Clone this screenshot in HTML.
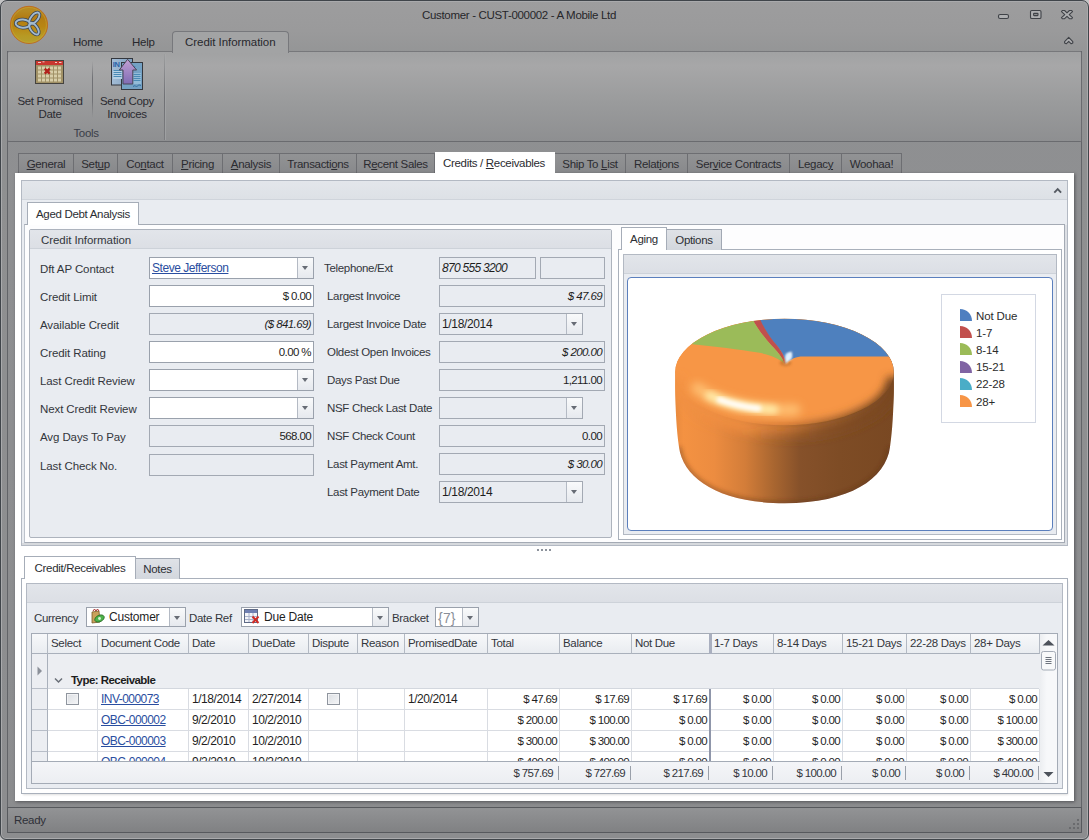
<!DOCTYPE html>
<html><head><meta charset="utf-8"><title>Customer</title>
<style>
*{box-sizing:border-box;margin:0;padding:0}
html,body{width:1089px;height:840px;overflow:hidden;background:#c4c4c5}
body{font-family:"Liberation Sans",sans-serif;font-size:11.5px;letter-spacing:-0.32px;color:#2a2a2a;position:relative}
.a{position:absolute}
.t{position:absolute;white-space:nowrap;line-height:14px}
.r{position:absolute;white-space:nowrap;line-height:14px;text-align:right}
.c{position:absolute;white-space:nowrap;line-height:14px;text-align:center}
u{text-decoration:underline;text-underline-offset:1px}
#win{left:0;top:0;width:1089px;height:840px;border:1px solid #40454a;border-radius:7px 7px 6px 6px;box-shadow:inset 0 0 0 1px #a9aaac;background:linear-gradient(#9d9d9e 0,#9a9a9b 30px,#949596 52px,#8f9091 150px,#8c8d8f 100%)}
.mt{position:absolute;top:153px;height:21px;border:1px solid #6d6e72;border-bottom:none;background:linear-gradient(#929395,#87888b);color:#2b2b30;text-align:center;line-height:21px;white-space:nowrap}
.f{position:absolute;height:22px;border:1px solid #a3a9b3;background:#e9ecf1}
.f.w{background:#fff;border-color:#9aa1ac}
.f .v{position:absolute;right:2px;top:3px;line-height:14px;white-space:nowrap;font-size:11.5px;letter-spacing:-0.6px;color:#1e1e1e}
.f .l{position:absolute;left:2px;top:3px;line-height:14px;white-space:nowrap;font-size:12px;letter-spacing:-0.45px;color:#1e1e1e}
.dd{position:absolute;right:0;top:0;bottom:0;width:16px;border-left:1px solid #b4bac4;background:linear-gradient(#f9fafb,#e6e9ee)}
.dd:after{content:"";position:absolute;left:3.5px;top:8px;border:3.8px solid transparent;border-top:4px solid #676c75;border-bottom:none}
.lb{position:absolute;white-space:nowrap;line-height:14px;color:#33363c}
.st{position:absolute;height:21px;border:1px solid #a1a8b3;border-bottom:none;background:linear-gradient(#dfe2e7,#d3d7dd);line-height:20px;text-align:center;color:#2c2e33;white-space:nowrap}
.st.on{background:#fff;border-color:#a6adb8;color:#2c2e33}
.gh{position:absolute;top:634px;height:20px;border-right:1px solid #b3b9c3;border-bottom:1px solid #a9b0bb;background:linear-gradient(#f7f8fa,#e9ecf0);line-height:18px;padding-left:3px;color:#33363c;white-space:nowrap;overflow:hidden}
.cell{position:absolute;height:21px;border-right:1px solid #d9dce2;border-bottom:1px solid #d9dce2;background:#fff;line-height:20px;white-space:nowrap;overflow:hidden;font-size:12px;letter-spacing:-0.45px;color:#1f1f1f}
.cell.n{text-align:right;padding-right:2px;font-size:11.5px;letter-spacing:-0.65px}
.cell.x{padding-left:3px}
.cell a{color:#2a4ea0;text-decoration:underline;letter-spacing:-0.55px}
.ind{position:absolute;left:32px;width:16px;border-right:1px solid #a9b0bb;border-bottom:1px solid #b8bec8;background:#eceef2}
.ft{position:absolute;top:766px;line-height:14px;text-align:right;white-space:nowrap;font-size:11.5px;letter-spacing:-0.65px;color:#33363c;border-right:1px solid #9aa0aa;padding-right:5px;height:14px}
.cb{position:absolute;width:13px;height:12px;border:1px solid #8f959e;background:linear-gradient(135deg,#dcdfe3,#f4f5f7);box-shadow:inset 0 0 0 1px #f2f3f5}
</style></head><body>
<div class="a" id="win"></div>
<div class="t" style="left:422px;top:8px;color:#26262a">Customer - CUST-000002 - A Mobile Ltd</div>
<svg class="a" style="left:9px;top:5px" width="40" height="40" viewBox="0 0 40 40">
<defs><linearGradient id="lg" x1="0" y1="0" x2="0" y2="1"><stop offset="0" stop-color="#b8881f"/><stop offset="0.12" stop-color="#b58a22"/><stop offset="0.3" stop-color="#b27c14"/><stop offset="0.55" stop-color="#b98613"/><stop offset="0.8" stop-color="#b79a24"/><stop offset="1" stop-color="#b3a030"/></linearGradient></defs>
<circle cx="20" cy="19.9" r="18.6" fill="url(#lg)" stroke="#c06a1c" stroke-width="0.9"/>
<circle cx="20" cy="19.9" r="17.4" fill="none" stroke="#c9a636" stroke-opacity="0.55" stroke-width="1"/>
<g fill="none" stroke="#3b4554" stroke-width="3.5"><ellipse cx="13.8" cy="18.6" rx="7.2" ry="4.1" transform="rotate(4 13.8 18.6)"/><ellipse cx="25.4" cy="13.2" rx="6.8" ry="3.4" transform="rotate(-50 25.4 13.2)"/><ellipse cx="25" cy="23.7" rx="6.8" ry="3.4" transform="rotate(54 25 23.7)"/></g>
<g fill="none" stroke="#a2bace" stroke-width="1.9"><ellipse cx="13.8" cy="18.6" rx="7.2" ry="4.1" transform="rotate(4 13.8 18.6)"/><ellipse cx="25.4" cy="13.2" rx="6.8" ry="3.4" transform="rotate(-50 25.4 13.2)"/><ellipse cx="25" cy="23.7" rx="6.8" ry="3.4" transform="rotate(54 25 23.7)"/></g>
</svg>
<svg class="a" style="left:990px;top:5px" width="95" height="45" viewBox="0 0 95 45">
<g fill="#aeafb1" stroke="#3f4247" stroke-width="1.1" stroke-linejoin="round">
<rect x="8.5" y="9.5" width="10" height="4" rx="1.6"/>
<rect x="40.5" y="5.5" width="10.5" height="8" rx="1.3"/><rect x="43.6" y="8.4" width="4.4" height="2.2" rx="0.5" fill="#8d8e90"/>
<path d="M72.3 5.5 L74.6 5.5 L77 7.9 L79.4 5.5 L81.7 5.5 L82.5 6.6 L79.2 9.6 L82.5 12.6 L81.7 13.7 L79.4 13.7 L77 11.3 L74.6 13.7 L72.3 13.7 L71.5 12.6 L74.8 9.6 L71.5 6.6 Z"/>
<path d="M74.6 36.6 L78.7 32.4 L82.8 36.6 L82.8 38 L81.2 38.8 L78.7 36.4 L76.2 38.8 L74.6 38 Z"/>
</g></svg>
<div class="a" style="left:7px;top:51px;width:1075px;height:782px;border:1px solid #626468;background:linear-gradient(#8f9092,#8b8c8e)"></div>
<div class="t" style="left:73px;top:35px;color:#28282d;letter-spacing:-0.25px">Home</div>
<div class="t" style="left:132px;top:35px;color:#28282d;letter-spacing:-0.25px">Help</div>
<div class="a" style="left:7px;top:51px;width:1075px;height:91px;border:1px solid #6a6b6f;border-top-color:#77787b;border-radius:2px;background:linear-gradient(#a1a2a3 0,#a7a7a8 14px,#9a9b9c 50px,#8e8f91 100%)"></div>
<div class="a" style="left:172px;top:31px;width:117px;height:22px;border:1px solid #77787c;border-bottom:none;border-radius:4px 4px 0 0;background:linear-gradient(#a2a3a4,#a2a3a4)"></div>
<div class="t" style="left:185px;top:35px;color:#28282d;letter-spacing:-0.05px">Credit Information</div>
<div class="a" style="left:164px;top:54px;width:1px;height:86px;background:linear-gradient(#9d9e9f,#6f7074 50%,#7b7c7f)"></div>
<div class="a" style="left:165px;top:54px;width:1px;height:86px;background:#a9aaab;opacity:.6"></div>
<div class="a" style="left:92px;top:61px;width:1px;height:57px;background:linear-gradient(rgba(110,111,115,0),#707175 30%,#707175 70%,rgba(110,111,115,0))"></div>
<div class="c" style="left:10px;width:80px;top:95px;color:#2b2b31;line-height:13px">Set Promised<br>Date</div>
<div class="c" style="left:94px;width:66px;top:95px;color:#2b2b31;line-height:13px">Send Copy<br>Invoices</div>
<div class="c" style="left:60px;width:52px;top:126px;color:#3a3d48">Tools</div>
<svg class="a" style="left:35px;top:60px" width="30" height="25" viewBox="0 0 30 25">
<rect x="0.5" y="0.5" width="28" height="23" fill="#a39468" stroke="#45433f"/>
<rect x="1" y="1" width="27" height="4" fill="#c9372f"/>
<path d="M3 2.5h3M7.5 1.8h2M20 2.5h2M24 2.5h2.5" stroke="#f0c9c4" stroke-width="1"/>
<rect x="1" y="5" width="27" height="18" fill="#a19166"/>
<g fill="#d8cea9">
<rect x="3" y="6.5" width="3" height="3"/>
<rect x="7" y="6.5" width="3" height="3"/>
<rect x="11" y="6.5" width="3" height="3"/>
<rect x="15" y="6.5" width="3" height="3"/>
<rect x="19" y="6.5" width="3" height="3"/>
<rect x="23" y="6.5" width="3" height="3"/>
<rect x="3" y="10.5" width="3" height="3"/>
<rect x="7" y="10.5" width="3" height="3"/>
<rect x="11" y="10.5" width="3" height="3"/>
<rect x="15" y="10.5" width="3" height="3"/>
<rect x="19" y="10.5" width="3" height="3"/>
<rect x="23" y="10.5" width="3" height="3"/>
<rect x="3" y="14.5" width="3" height="3"/>
<rect x="7" y="14.5" width="3" height="3"/>
<rect x="11" y="14.5" width="3" height="3"/>
<rect x="15" y="14.5" width="3" height="3"/>
<rect x="19" y="14.5" width="3" height="3"/>
<rect x="23" y="14.5" width="3" height="3"/>
<rect x="3" y="18.5" width="3" height="3"/>
<rect x="7" y="18.5" width="3" height="3"/>
<rect x="11" y="18.5" width="3" height="3"/>
<rect x="15" y="18.5" width="3" height="3"/>
<rect x="19" y="18.5" width="3" height="3"/>
<rect x="23" y="18.5" width="3" height="3"/>
</g>
<path d="M9.7 8.6 L14.7 13.6 M14.7 8.6 L9.7 13.6" stroke="#b3211c" stroke-width="2.3"/>
</svg>
<svg class="a" style="left:111px;top:57px" width="34" height="34" viewBox="0 0 34 34">
<defs><linearGradient id="ar" x1="0" y1="0" x2="0" y2="1"><stop offset="0" stop-color="#c3a0d4"/><stop offset="1" stop-color="#7f6bb4"/></linearGradient>
<linearGradient id="pg1" x1="0" y1="0" x2="1" y2="0"><stop offset="0" stop-color="#a4bdd6"/><stop offset="1" stop-color="#7f9fc0"/></linearGradient></defs>
<rect x="0.5" y="1.5" width="21" height="26.5" fill="url(#pg1)" stroke="#33373e"/>
<rect x="10.5" y="5.5" width="21" height="27" fill="#74a1c4" stroke="#33373e"/>
<rect x="2" y="13" width="9" height="9" fill="#b5d0e4"/><rect x="22" y="16" width="8" height="11" fill="#93bcd8"/>
<g stroke="#4a8ab5" stroke-width="1"><path d="M2.5 13.5h8M2.5 15.5h8M2.5 17.5h8M2.5 19.5h8M22.5 17.5h7M22.5 19.5h7M22.5 21.5h7M22.5 23.5h7"/></g>
<path d="M22 29.5 c2 -2 3 1 4.5 -0.5 s2 -1 3.5 -0.5" fill="none" stroke="#2f6f9f" stroke-width="1"/>
<text x="1.8" y="10.3" font-family="Liberation Sans" font-size="7.5" font-weight="bold" fill="#2a62a8" letter-spacing="-0.3">IN</text>
<text x="21" y="12" font-family="Liberation Sans" font-size="6" font-weight="bold" fill="#3b78b6">v</text>
<path d="M16.6 2.3 L25.6 13 L21.8 13 L21.8 27 L12 27 L12 13 L8.3 13 Z" fill="url(#ar)" stroke="#4a4656" stroke-width="1"/>
</svg>
<div class="mt" style="left:18px;width:56px"><u>G</u>eneral</div>
<div class="mt" style="left:73px;width:45px">Set<u>u</u>p</div>
<div class="mt" style="left:117px;width:56px">Co<u>n</u>tact</div>
<div class="mt" style="left:172px;width:51px"><u>P</u>ricing</div>
<div class="mt" style="left:222px;width:58px"><u>A</u>nalysis</div>
<div class="mt" style="left:279px;width:78px">Transacti<u>o</u>ns</div>
<div class="mt" style="left:356px;width:79px">R<u>e</u>cent Sales</div>
<div class="mt" style="left:554px;width:72px">Ship To <u>L</u>ist</div>
<div class="mt" style="left:625px;width:63px">Relat<u>i</u>ons</div>
<div class="mt" style="left:687px;width:103px">Ser<u>v</u>ice Contracts</div>
<div class="mt" style="left:789px;width:53px">Legac<u>y</u></div>
<div class="mt" style="left:841px;width:61px">Woohaa!</div>
<div class="a" style="left:15px;top:173px;width:1059px;height:628px;background:#fff;box-shadow:1px 1px 3px rgba(40,40,45,.55)"></div>
<div class="a" style="left:435px;top:152px;width:120px;height:22px;background:#fff"></div>
<div class="t" style="left:443px;top:156px;color:#2b2b30">Credits / <u>R</u>eceivables</div>
<div class="a" style="left:21px;top:180px;width:1047px;height:366px;border:1px solid #b3b9c3;background:#d6d9dd"></div>
<div class="a" style="left:22px;top:181px;width:1045px;height:362px;background:#e9ecf1"></div>
<div class="a" style="left:22px;top:181px;width:1045px;height:19px;background:linear-gradient(#e3e6eb,#dde1e6);border-bottom:1px solid #cfd4db"></div>
<svg class="a" style="left:1053px;top:187px" width="10" height="8"><path d="M1.3 5.6 L4.7 2.2 L8.1 5.6" fill="none" stroke="#555a62" stroke-width="1.9"/></svg>
<div class="a" style="left:24px;top:224px;width:1041px;height:319px;background:#fdfdfe;border:1px solid #a4aab4;border-left-color:#bcc2cb"></div>
<div class="a" style="left:1065px;top:225px;width:2px;height:320px;background:#dcdfe4"></div>
<div class="st on" style="left:27px;top:202px;width:112px;height:23px;line-height:22px">Aged Debt Analysis</div>
<div class="a" style="left:29px;top:229px;width:583px;height:309px;border:1px solid #adb3bd;border-radius:2px;background:#e9ecf1"></div>
<div class="a" style="left:30px;top:230px;width:581px;height:19px;background:linear-gradient(#e2e5ea,#dcdfe5);border-bottom:1px solid #cdd2d9"></div>
<div class="lb" style="left:41px;top:233px;letter-spacing:-0.07px">Credit Information</div>
<div class="lb" style="left:40px;top:262px;letter-spacing:-0.1px">Dft AP Contact</div>
<div class="lb" style="left:40px;top:290px;letter-spacing:-0.1px">Credit Limit</div>
<div class="lb" style="left:40px;top:318px;letter-spacing:-0.1px">Available Credit</div>
<div class="lb" style="left:40px;top:346px;letter-spacing:-0.1px">Credit Rating</div>
<div class="lb" style="left:40px;top:374px;letter-spacing:-0.1px">Last Credit Review</div>
<div class="lb" style="left:40px;top:402px;letter-spacing:-0.1px">Next Credit Review</div>
<div class="lb" style="left:40px;top:430px;letter-spacing:-0.1px">Avg Days To Pay</div>
<div class="lb" style="left:40px;top:459px;letter-spacing:-0.1px">Last Check No.</div>
<div class="f w" style="left:149px;top:257px;width:165px"><span class="l" style="color:#2a4ea0;text-decoration:underline;letter-spacing:-0.45px">Steve Jefferson</span><div class="dd"></div></div>
<div class="f w" style="left:149px;top:285px;width:165px"><span class="v">$ 0.00</span></div>
<div class="f" style="left:149px;top:313px;width:165px"><span class="v" style="font-style:italic">($ 841.69)</span></div>
<div class="f w" style="left:149px;top:341px;width:165px"><span class="v">0.00 %</span></div>
<div class="f w" style="left:149px;top:369px;width:165px"><div class="dd"></div></div>
<div class="f w" style="left:149px;top:397px;width:165px"><div class="dd"></div></div>
<div class="f" style="left:149px;top:425px;width:165px"><span class="v">568.00</span></div>
<div class="f" style="left:149px;top:454px;width:165px"></div>
<div class="lb" style="left:324px;top:261px">Telephone/Ext</div>
<div class="lb" style="left:327px;top:289px">Largest Invoice</div>
<div class="lb" style="left:327px;top:317px">Largest Invoice Date</div>
<div class="lb" style="left:327px;top:345px">Oldest Open Invoices</div>
<div class="lb" style="left:327px;top:373px">Days Past Due</div>
<div class="lb" style="left:327px;top:401px">NSF Check Last Date</div>
<div class="lb" style="left:327px;top:429px">NSF Check Count</div>
<div class="lb" style="left:327px;top:457px">Last Payment Amt.</div>
<div class="lb" style="left:327px;top:485px">Last Payment Date</div>
<div class="f" style="left:439px;top:257px;width:97px"><span class="l" style="font-style:italic;letter-spacing:-0.7px">870 555 3200</span></div>
<div class="f" style="left:540px;top:257px;width:65px"></div>
<div class="f" style="left:439px;top:285px;width:166px"><span class="v" style="font-style:italic">$ 47.69</span></div>
<div class="f" style="left:439px;top:313px;width:144px"><span class="l" style="letter-spacing:-0.35px">1/18/2014</span><div class="dd"></div></div>
<div class="f" style="left:439px;top:341px;width:166px"><span class="v" style="font-style:italic">$ 200.00</span></div>
<div class="f" style="left:439px;top:369px;width:166px"><span class="v">1,211.00</span></div>
<div class="f" style="left:439px;top:397px;width:144px"><div class="dd"></div></div>
<div class="f" style="left:439px;top:425px;width:166px"><span class="v">0.00</span></div>
<div class="f" style="left:439px;top:453px;width:166px"><span class="v" style="font-style:italic">$ 30.00</span></div>
<div class="f" style="left:439px;top:481px;width:144px"><span class="l" style="letter-spacing:-0.35px">1/18/2014</span><div class="dd"></div></div>
<div class="a" style="left:618px;top:249px;width:444px;height:291px;border:1px solid #a9b0bb;background:#fff"></div>
<div class="st" style="left:666px;top:229px;width:56px">Options</div>
<div class="st on" style="left:621px;top:227px;width:46px;height:23px;line-height:22px">Aging</div>
<div class="a" style="left:623px;top:254px;width:434px;height:281px;border:1px solid #b3b9c3;background:#e9ecf1"></div>
<div class="a" style="left:624px;top:255px;width:432px;height:19px;background:linear-gradient(#e2e5ea,#dcdfe5);border-bottom:1px solid #cdd2d9"></div>
<div class="a" style="left:627px;top:277px;width:426px;height:254px;border:1px solid #5b7fbd;border-radius:4px;background:#fff"></div>
<svg class="a" style="left:628px;top:278px" width="424" height="252" viewBox="628 278 424 252">
<defs>
<linearGradient id="pb" gradientUnits="userSpaceOnUse" x1="675" y1="0" x2="894" y2="0">
<stop offset="0" stop-color="#e88a3e"/><stop offset="0.04" stop-color="#f49242"/><stop offset="0.18" stop-color="#ec8c40"/><stop offset="0.32" stop-color="#d37d39"/><stop offset="0.45" stop-color="#a96630"/><stop offset="0.57" stop-color="#86512a"/><stop offset="0.75" stop-color="#7e4c25"/><stop offset="1" stop-color="#794822"/>
</linearGradient>
<linearGradient id="rimg" gradientUnits="userSpaceOnUse" x1="675" y1="0" x2="894" y2="0">
<stop offset="0" stop-color="#f39243"/><stop offset="0.3" stop-color="#ee8e41"/><stop offset="0.5" stop-color="#d17b38"/><stop offset="0.65" stop-color="#a7642f"/><stop offset="0.85" stop-color="#875229"/><stop offset="1" stop-color="#7d4b24"/>
</linearGradient>
<linearGradient id="shg" gradientUnits="userSpaceOnUse" x1="675" y1="0" x2="894" y2="0">
<stop offset="0" stop-color="#7a4822" stop-opacity="0"/><stop offset="0.35" stop-color="#7a4822" stop-opacity="0.04"/><stop offset="0.52" stop-color="#7a4822" stop-opacity="0.4"/><stop offset="0.7" stop-color="#7a4822" stop-opacity="0.8"/><stop offset="1" stop-color="#774520" stop-opacity="0.9"/>
</linearGradient>
<clipPath id="psil"><path d="M675.2 372 A109.3 53.2 0 0 1 893.8 372 L893.8 386 C893.6 410 892.5 430 890 447 C886 479 849 503.2 784.5 503.2 C720 503.2 683 479 679 447 C676.5 430 675.4 410 675.2 386 Z"/></clipPath>
<clipPath id="ptop"><ellipse cx="784.5" cy="372" rx="109.4" ry="53.2"/></clipPath>
<filter id="bl1" x="-30%" y="-30%" width="160%" height="160%"><feGaussianBlur stdDeviation="1"/></filter>
<filter id="bl2" x="-20%" y="-40%" width="140%" height="180%"><feGaussianBlur stdDeviation="2"/></filter>
<filter id="bl3" x="-20%" y="-40%" width="140%" height="180%"><feGaussianBlur stdDeviation="3"/></filter>
<filter id="bl4" x="-30%" y="-50%" width="160%" height="200%"><feGaussianBlur stdDeviation="4"/></filter>
</defs>
<g clip-path="url(#psil)">
<rect x="670" y="310" width="230" height="200" fill="url(#pb)"/>
<path d="M679 447 C683 479 720 503.2 784.5 503.2 C849 503.2 886 479 890 447" fill="none" stroke="#5a3315" stroke-opacity="0.4" stroke-width="5" filter="url(#bl2)"/>
<g clip-path="url(#ptop)">
<rect x="670" y="310" width="230" height="125" fill="#f79646"/>
<path d="M785.5 363.5 C785.3 357 781 350 773 341.5 C768 335 762 326 758.3 317 L760 300 L910 300 L910 356.4 L803 356.4 C796 356.4 791 359 785.5 363.5 Z" fill="#4e80be"/>
<path d="M785.5 363.5 C785.3 357 781 350 773.5 341.5 C768.5 335 762.5 326 759.3 317 L751.3 317 C756 327 764 337 771 345 C778 352 782 357 784.3 363.5 Z" fill="#c0504d"/>
<path d="M784.5 363.5 C782 357 778 352 771 345 C764 337 756 327 751.5 317 L660 317 L690 344 C715 346.5 740 349.5 758 352.6 C770 354.8 778 358 784.5 363.5 Z" fill="#9bbb59"/>
</g>
<path d="M675 372 A109.4 53.2 0 0 0 894 372" fill="none" stroke="url(#rimg)" stroke-width="14" filter="url(#bl4)" transform="translate(0 5)"/>
<path d="M675 372 A109.4 53.2 0 0 0 894 372" fill="none" stroke="url(#shg)" stroke-width="9" filter="url(#bl4)" transform="translate(0 10)"/>
<path d="M697.0 388.0 A101 44 0 0 0 795.1 409.8" fill="none" stroke="#ffc477" stroke-width="11" stroke-opacity="0.9" stroke-linecap="round" filter="url(#bl4)"/>
<path d="M709.4 395.4 A101 44 0 0 0 773.9 409.8" fill="none" stroke="#ffe9a6" stroke-width="9" stroke-linecap="round" filter="url(#bl3)"/>
<path d="M719.6 399.7 A101 44 0 0 0 758.4 408.5" fill="none" stroke="#ffffff" stroke-width="6" stroke-linecap="round" filter="url(#bl2)"/>
<ellipse cx="785.5" cy="363" rx="6" ry="3.2" fill="#b96b2a" fill-opacity="0.55" filter="url(#bl1)"/>
<path d="M785.8 364 C785 358 786.5 353.5 791.5 351.5 C792.5 355 790 360 785.8 364 Z" fill="#ffffff" filter="url(#bl1)"/>
<ellipse cx="788.6" cy="356.5" rx="3.4" ry="3.8" fill="#dff1ff" fill-opacity="0.9" filter="url(#bl1)"/>
</g>
</svg>

<div class="a" style="left:941px;top:294px;width:95px;height:129px;border:1px solid #d3d8e3;background:#fff"></div>
<svg class="a" style="left:960px;top:309.0px" width="13" height="13"><path d="M0 0 C7 0 12 5 12 12 L0 12 Z" fill="#4e7fc0"/></svg>
<div class="t" style="left:976px;top:308.5px;color:#2c2c2c;font-size:11.5px;letter-spacing:-0.15px">Not Due</div>
<svg class="a" style="left:960px;top:326.2px" width="13" height="13"><path d="M0 0 C7 0 12 5 12 12 L0 12 Z" fill="#c2504d"/></svg>
<div class="t" style="left:976px;top:325.7px;color:#2c2c2c;font-size:11.5px;letter-spacing:-0.15px">1-7</div>
<svg class="a" style="left:960px;top:343.4px" width="13" height="13"><path d="M0 0 C7 0 12 5 12 12 L0 12 Z" fill="#9bbb58"/></svg>
<div class="t" style="left:976px;top:342.9px;color:#2c2c2c;font-size:11.5px;letter-spacing:-0.15px">8-14</div>
<svg class="a" style="left:960px;top:360.6px" width="13" height="13"><path d="M0 0 C7 0 12 5 12 12 L0 12 Z" fill="#8064a3"/></svg>
<div class="t" style="left:976px;top:360.1px;color:#2c2c2c;font-size:11.5px;letter-spacing:-0.15px">15-21</div>
<svg class="a" style="left:960px;top:377.8px" width="13" height="13"><path d="M0 0 C7 0 12 5 12 12 L0 12 Z" fill="#4aadc7"/></svg>
<div class="t" style="left:976px;top:377.3px;color:#2c2c2c;font-size:11.5px;letter-spacing:-0.15px">22-28</div>
<svg class="a" style="left:960px;top:395.0px" width="13" height="13"><path d="M0 0 C7 0 12 5 12 12 L0 12 Z" fill="#f79546"/></svg>
<div class="t" style="left:976px;top:394.5px;color:#2c2c2c;font-size:11.5px;letter-spacing:-0.15px">28+</div>
<div class="a" style="left:537px;top:549px;width:14px;height:2px;background:repeating-linear-gradient(90deg,#8d939c 0,#8d939c 2px,transparent 2px,transparent 4px)"></div>
<div class="a" style="left:21px;top:578px;width:1047px;height:216px;border:1px solid #a9b0bb;background:#fff;box-shadow:1px 2px 2px -1px rgba(0,0,0,.13)"></div>
<div class="st" style="left:135px;top:558px;width:45px">Notes</div>
<div class="st on" style="left:24px;top:556px;width:112px;height:23px;line-height:22px">Credit/Receivables</div>
<div class="a" style="left:26px;top:583px;width:1037px;height:206px;border:1px solid #b3b9c3;background:#e9ecf1"></div>
<div class="a" style="left:27px;top:584px;width:1035px;height:19px;background:linear-gradient(#e2e5ea,#dcdfe5);border-bottom:1px solid #cdd2d9"></div>
<div class="lb" style="left:34px;top:611px">Currency</div>
<div class="f w" style="left:86px;top:607px;width:100px;height:20px"><span class="l" style="left:22px;top:2px;letter-spacing:-0.2px">Customer</span><div class="dd"></div></div>
<div class="lb" style="left:189px;top:611px">Date Ref</div>
<div class="f w" style="left:241px;top:607px;width:148px;height:20px"><span class="l" style="left:22px;top:2px;letter-spacing:-0.2px">Due Date</span><div class="dd"></div></div>
<div class="lb" style="left:392px;top:611px">Bracket</div>
<div class="f w" style="left:435px;top:607px;width:44px;height:20px"><span class="l" style="left:2px;top:2.5px;color:#8a8f98;font-size:14px;letter-spacing:0.2px">{7}</span><div class="dd"></div></div>
<svg class="a" style="left:89px;top:608px" width="17" height="17" viewBox="0 0 17 17"><path d="M3 4 L10 3 L11 14 L3 15 Z" fill="#c9a15a" stroke="#7a5a2a" stroke-width=".8"/><path d="M4 3 L5.5 1 L7 3 L8.5 1 L10 3" fill="none" stroke="#a33" stroke-width="1"/><ellipse cx="10.5" cy="10.5" rx="5" ry="3.2" transform="rotate(-25 10.5 10.5)" fill="#4db34a" stroke="#256b23" stroke-width=".8"/><circle cx="10.5" cy="10.5" r="1.4" fill="#d9f2d6"/></svg>
<svg class="a" style="left:244px;top:609px" width="17" height="16" viewBox="0 0 17 16"><rect x=".5" y=".5" width="13" height="13" fill="#f3f4f8" stroke="#5e6a86"/><rect x="1" y="1" width="12" height="3" fill="#6f7fb2"/><path d="M1 7.5h12M1 10.5h12M5 4v9M9 4v9" stroke="#a9b2cc" stroke-width="1"/><path d="M8.5 7.5 L14.5 14 M14.5 7.5 L8.5 14" stroke="#d12a23" stroke-width="2"/></svg>
<div class="a" style="left:31px;top:633px;width:1027px;height:151px;border:1px solid #a4abb6;background:#eceef2"></div>
<div class="gh" style="left:32px;width:16px;padding:0"></div>
<div class="gh" style="left:48px;width:50px">Select</div>
<div class="gh" style="left:98px;width:91px">Document Code</div>
<div class="gh" style="left:189px;width:60px">Date</div>
<div class="gh" style="left:249px;width:60px">DueDate</div>
<div class="gh" style="left:309px;width:49px">Dispute</div>
<div class="gh" style="left:358px;width:47px">Reason</div>
<div class="gh" style="left:405px;width:83px">PromisedDate</div>
<div class="gh" style="left:488px;width:72px">Total</div>
<div class="gh" style="left:560px;width:72px">Balance</div>
<div class="gh" style="left:632px;width:78px">Not Due</div>
<div class="gh" style="left:711px;width:63px">1-7 Days</div>
<div class="gh" style="left:774px;width:69px">8-14 Days</div>
<div class="gh" style="left:843px;width:64px">15-21 Days</div>
<div class="gh" style="left:907px;width:64px">22-28 Days</div>
<div class="gh" style="left:971px;width:69px">28+ Days</div>
<div class="a" style="left:709px;top:634px;width:3px;height:20px;background:#a9afbf"></div>
<div class="a" style="left:32px;top:654px;width:1007px;height:35px;background:#eceef2;border-bottom:1px solid #d3d7de"></div>
<div class="ind" style="top:654px;height:35px"></div>
<svg class="a" style="left:37px;top:666px" width="6" height="10"><path d="M0.5 0.5 L5 5 L0.5 9.5 Z" fill="#8b9099"/></svg>
<svg class="a" style="left:54px;top:677px" width="9" height="7"><path d="M1 1.5 L4.5 5 L8 1.5" fill="none" stroke="#6a6f78" stroke-width="1.5"/></svg>
<div class="t" style="left:71px;top:673px;font-weight:bold;font-size:11.5px;letter-spacing:-0.55px;color:#1d1d1d">Type: Receivable</div>
<div class="a" style="left:32px;top:689px;width:1008px;height:72px;overflow:hidden">
<div class="ind" style="left:0;top:0px;height:21px"></div>
<div class="cell x" style="left:16px;top:0px;width:50px"></div>
<div class="cell x" style="left:66px;top:0px;width:91px"><a>INV-000073</a></div>
<div class="cell x" style="left:157px;top:0px;width:60px">1/18/2014</div>
<div class="cell x" style="left:217px;top:0px;width:60px">2/27/2014</div>
<div class="cell x" style="left:277px;top:0px;width:49px"></div>
<div class="cell x" style="left:326px;top:0px;width:47px"></div>
<div class="cell x" style="left:373px;top:0px;width:83px">1/20/2014</div>
<div class="cell n" style="left:456px;top:0px;width:72px">$ 47.69</div>
<div class="cell n" style="left:528px;top:0px;width:72px">$ 17.69</div>
<div class="cell n" style="left:600px;top:0px;width:78px">$ 17.69</div>
<div class="cell n" style="left:679px;top:0px;width:63px">$ 0.00</div>
<div class="cell n" style="left:742px;top:0px;width:69px">$ 0.00</div>
<div class="cell n" style="left:811px;top:0px;width:64px">$ 0.00</div>
<div class="cell n" style="left:875px;top:0px;width:64px">$ 0.00</div>
<div class="cell n" style="left:939px;top:0px;width:69px">$ 0.00</div>
<div class="ind" style="left:0;top:21px;height:21px"></div>
<div class="cell x" style="left:16px;top:21px;width:50px"></div>
<div class="cell x" style="left:66px;top:21px;width:91px"><a>OBC-000002</a></div>
<div class="cell x" style="left:157px;top:21px;width:60px">9/2/2010</div>
<div class="cell x" style="left:217px;top:21px;width:60px">10/2/2010</div>
<div class="cell x" style="left:277px;top:21px;width:49px"></div>
<div class="cell x" style="left:326px;top:21px;width:47px"></div>
<div class="cell x" style="left:373px;top:21px;width:83px"></div>
<div class="cell n" style="left:456px;top:21px;width:72px">$ 200.00</div>
<div class="cell n" style="left:528px;top:21px;width:72px">$ 100.00</div>
<div class="cell n" style="left:600px;top:21px;width:78px">$ 0.00</div>
<div class="cell n" style="left:679px;top:21px;width:63px">$ 0.00</div>
<div class="cell n" style="left:742px;top:21px;width:69px">$ 0.00</div>
<div class="cell n" style="left:811px;top:21px;width:64px">$ 0.00</div>
<div class="cell n" style="left:875px;top:21px;width:64px">$ 0.00</div>
<div class="cell n" style="left:939px;top:21px;width:69px">$ 100.00</div>
<div class="ind" style="left:0;top:42px;height:21px"></div>
<div class="cell x" style="left:16px;top:42px;width:50px"></div>
<div class="cell x" style="left:66px;top:42px;width:91px"><a>OBC-000003</a></div>
<div class="cell x" style="left:157px;top:42px;width:60px">9/2/2010</div>
<div class="cell x" style="left:217px;top:42px;width:60px">10/2/2010</div>
<div class="cell x" style="left:277px;top:42px;width:49px"></div>
<div class="cell x" style="left:326px;top:42px;width:47px"></div>
<div class="cell x" style="left:373px;top:42px;width:83px"></div>
<div class="cell n" style="left:456px;top:42px;width:72px">$ 300.00</div>
<div class="cell n" style="left:528px;top:42px;width:72px">$ 300.00</div>
<div class="cell n" style="left:600px;top:42px;width:78px">$ 0.00</div>
<div class="cell n" style="left:679px;top:42px;width:63px">$ 0.00</div>
<div class="cell n" style="left:742px;top:42px;width:69px">$ 0.00</div>
<div class="cell n" style="left:811px;top:42px;width:64px">$ 0.00</div>
<div class="cell n" style="left:875px;top:42px;width:64px">$ 0.00</div>
<div class="cell n" style="left:939px;top:42px;width:69px">$ 300.00</div>
<div class="ind" style="left:0;top:63px;height:21px"></div>
<div class="cell x" style="left:16px;top:63px;width:50px"></div>
<div class="cell x" style="left:66px;top:63px;width:91px"><a>OBC-000004</a></div>
<div class="cell x" style="left:157px;top:63px;width:60px">9/2/2010</div>
<div class="cell x" style="left:217px;top:63px;width:60px">10/2/2010</div>
<div class="cell x" style="left:277px;top:63px;width:49px"></div>
<div class="cell x" style="left:326px;top:63px;width:47px"></div>
<div class="cell x" style="left:373px;top:63px;width:83px"></div>
<div class="cell n" style="left:456px;top:63px;width:72px">$ 400.00</div>
<div class="cell n" style="left:528px;top:63px;width:72px">$ 400.00</div>
<div class="cell n" style="left:600px;top:63px;width:78px">$ 0.00</div>
<div class="cell n" style="left:679px;top:63px;width:63px">$ 0.00</div>
<div class="cell n" style="left:742px;top:63px;width:69px">$ 0.00</div>
<div class="cell n" style="left:811px;top:63px;width:64px">$ 0.00</div>
<div class="cell n" style="left:875px;top:63px;width:64px">$ 0.00</div>
<div class="cell n" style="left:939px;top:63px;width:69px">$ 400.00</div>
</div>
<div class="cb" style="left:66px;top:693px"></div>
<div class="cb" style="left:327px;top:693px"></div>
<div class="a" style="left:709px;top:689px;width:2px;height:72px;background:#8f96aa"></div>
<div class="a" style="left:32px;top:761px;width:1025px;height:22px;border-top:1px solid #a4abb6;background:linear-gradient(#f4f5f8,#eceef2)"></div>
<div class="ft" style="left:480px;width:79px">$ 757.69</div>
<div class="ft" style="left:552px;width:79px">$ 727.69</div>
<div class="ft" style="left:630px;width:79px">$ 217.69</div>
<div class="ft" style="left:694px;width:79px">$ 10.00</div>
<div class="ft" style="left:763px;width:79px">$ 100.00</div>
<div class="ft" style="left:827px;width:79px">$ 0.00</div>
<div class="ft" style="left:891px;width:79px">$ 0.00</div>
<div class="ft" style="left:960px;width:79px">$ 400.00</div>
<div class="a" style="left:1040px;top:634px;width:17px;height:149px;background:linear-gradient(90deg,#eceef1,#f7f8fa 40%,#f7f8fa)"></div>
<svg class="a" style="left:1040px;top:634px" width="17" height="149"><path d="M2.5 11.5 L8.5 6 L14.5 11.5 Z" fill="#4d525b"/><rect x="1.5" y="17.5" width="14" height="18.5" rx="2" fill="#f8f9fa" stroke="#a4abb6"/><path d="M5.5 23.5h6M5.5 25.5h6M5.5 27.5h6M5.5 29.5h6" stroke="#6d737d" stroke-width="1"/><path d="M3.5 138 L8.5 143 L13.5 138 Z" fill="#4d525b"/></svg>
<div class="a" style="left:7px;top:807px;width:1075px;height:26px;border:1px solid #57595d;border-radius:1px;background:linear-gradient(#929395,#808183)"></div>
<div class="t" style="left:14px;top:813px;color:#2f3038">Ready</div>
<svg class="a" style="left:1069px;top:819px" width="12" height="12"><g fill="#6a6b6e"><rect x="8" y="0" width="2" height="2"/><rect x="4" y="4" width="2" height="2"/><rect x="8" y="4" width="2" height="2"/><rect x="0" y="8" width="2" height="2"/><rect x="4" y="8" width="2" height="2"/><rect x="8" y="8" width="2" height="2"/></g></svg>
</body></html>
